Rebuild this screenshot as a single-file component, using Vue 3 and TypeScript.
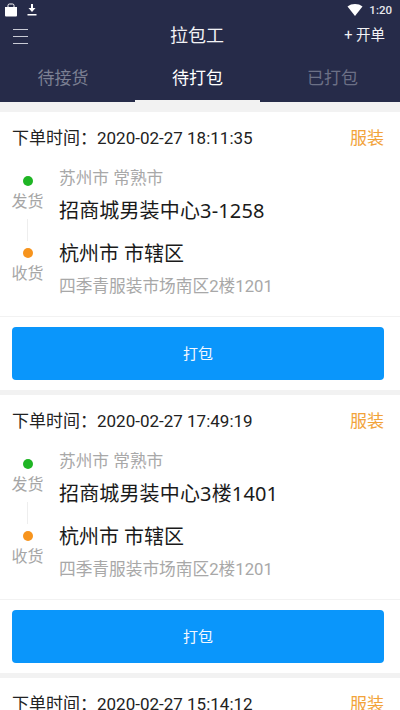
<script setup lang="ts">
interface Order { time: string; from: string; fromAddr: string; to: string; toAddr: string }
const tabs = ['待接货', '待打包', '已打包']
const orders: Order[] = [
  { time: '2020-02-27 18:11:35', from: '苏州市 常熟市', fromAddr: '招商城男装中心3-1258', to: '杭州市 市辖区', toAddr: '四季青服装市场南区2楼1201' },
  { time: '2020-02-27 17:49:19', from: '苏州市 常熟市', fromAddr: '招商城男装中心3楼1401', to: '杭州市 市辖区', toAddr: '四季青服装市场南区2楼1201' },
  { time: '2020-02-27 15:14:12', from: '苏州市 常熟市', fromAddr: '招商城男装中心3楼1401', to: '杭州市 市辖区', toAddr: '四季青服装市场南区2楼1201' },
]
</script>

<template>
  <div class="page">
    <header class="top">
      <div class="status">
        <div class="status-left">
          <svg width="14" height="14" viewBox="0 0 14 14"><path d="M1 4h12v8.500a1 1 0 0 1-1 1H2a1 1 0 0 1-1-1z" fill="#fff"/><path d="M4 4.500V2.500a1.500 1.500 0 0 1 1.500-1.500h3A1.500 1.500 0 0 1 10 2.500v2" fill="none" stroke="#fff" stroke-width="1"/></svg>
          <svg width="10" height="14" viewBox="0 0 10 14"><path d="M4 1h2v4h2.500L5 9 1.500 5H4z" fill="#fff"/><rect x="0.500" y="11" width="9" height="1.500" fill="#fff"/></svg>
        </div>
        <div class="status-right">
          <svg width="16" height="12" viewBox="0 0 16 12"><path d="M0.500 2.500C4.500-.8 11.500-.8 15.500 2.500L8 12z" fill="#fff"/></svg>
          <span class="clock">1:20</span>
        </div>
      </div>
      <div class="bar">
        <div class="menu"><i></i><i></i><i></i></div>
        <div class="title">拉包工</div>
        <div class="add">+ 开单</div>
      </div>
      <nav class="tabs">
        <div v-for="(t, i) in tabs" :key="t" class="tab" :class="{ active: i === 1, last: i === 2 }">{{ t }}</div>
      </nav>
    </header>

    <main class="list">
      <section v-for="o in orders" :key="o.time" class="card">
        <div class="card-head">
          <span class="time">下单时间：{{ o.time }}</span>
          <span class="kind">服装</span>
        </div>
        <div class="route">
          <div class="marks">
            <span class="dot green"></span>
            <span class="mark-label">发货</span>
            <span class="line"></span>
            <span class="dot orange"></span>
            <span class="mark-label">收货</span>
          </div>
          <div class="addrs">
            <div class="city">{{ o.from }}</div>
            <div class="addr first">{{ o.fromAddr }}</div>
            <div class="addr second">{{ o.to }}</div>
            <div class="city lower">{{ o.toAddr }}</div>
          </div>
        </div>
        <div class="action">
          <button class="pack" type="button">打包</button>
        </div>
      </section>
    </main>
  </div>
</template>

<style scoped>
.page {
  width: 400px;
  height: 710px;
  overflow: hidden;
  background: #f2f2f2;
  font-family: Roboto, "Noto Sans CJK SC", sans-serif;
}
.top { height: 102px; background: #262b49; color: #fff; }
.status { height: 20px; padding: 0 8px 0 4px; display: flex; justify-content: space-between; align-items: center; }
.status-left { display: flex; gap: 9px; align-items: center; }
.status-right { display: flex; gap: 6px; align-items: center; }
.clock { font: 500 11.500px Roboto, sans-serif; color: #e6e7ec; }
.bar { height: 32px; padding: 0 15px 0 13px; display: flex; align-items: center; position: relative; justify-content: space-between; }
.menu { width: 15px; display: flex; flex-direction: column; gap: 6px; }
.menu i { display: block; height: 1px; background: #c9cbd6; }
.title { position: absolute; left: 0; right: 6px; top: 0; text-align: center; font-size: 18px; line-height: 32px; color: #f2f2f5; }
.add { font-size: 14.500px; line-height: 32px; color: #f2f2f5; }
.tabs { height: 50px; display: grid; grid-template-columns: 126px 143px 127px; }
.tab { position: relative; display: flex; align-items: center; justify-content: center; font-size: 17px; line-height: 48px; color: #7c8093; height: 50px; padding-top: 2px; box-sizing: border-box; }
.tab.active { color: #fff; }
.tab.active::after { content: ""; position: absolute; left: 9px; width: 125px; bottom: 0; height: 2px; background: #f2f2f2; }
.tab.last { color: #6c7086; }
.list { padding-top: 10px; display: flex; flex-direction: column; gap: 5px; }
.card { background: #fff; height: 278px; box-sizing: border-box; }
.card-head { height: 50px; padding: 2px 16px 0 12px; box-sizing: border-box; display: flex; justify-content: space-between; align-items: center; }
.time { font-size: 17px; line-height: 48px; color: #222; white-space: nowrap; }
.kind { font-size: 17px; line-height: 48px; color: #f2a33a; }
.route { height: 155px; display: flex; box-sizing: border-box; border-bottom: 1px solid #f2f2f2; }
.marks { width: 59px; flex: none; display: flex; flex-direction: column; align-items: center; padding-right: 4px; box-sizing: border-box; padding-top: 14px; }
.dot { width: 10px; height: 10px; border-radius: 50%; flex: none; }
.green { background: #1fb524; }
.orange { background: #f7941d; }
.mark-label { font-size: 16px; line-height: 24px; color: #a6a6a6; margin-top: 4px; }
.line { width: 1px; height: 22px; background: #eeeeee; margin: 5px 0 7px; }
.addrs { flex: 1; }
.city { font-size: 16.700px; line-height: 24px; color: #a8a8a8; margin-top: 5px; }
.city.lower { margin-top: 7px; }
.addr { font-size: 20px; line-height: 28px; color: #1a1a1a; }
.addr.first { margin-top: 6px; font-family: "Noto Sans", "Noto Sans CJK SC", sans-serif; letter-spacing: 0.15px; }
.addr.second { margin-top: 15px; }
.action { padding: 10px 16px 0 12px; }
.pack {
  display: block; width: 100%; height: 53px; border: 0; border-radius: 4px; padding: 0 0 3px;
  background: #0a96fb; color: #f2f8ff; font: 15px "Noto Sans CJK SC", sans-serif;
}
</style>
